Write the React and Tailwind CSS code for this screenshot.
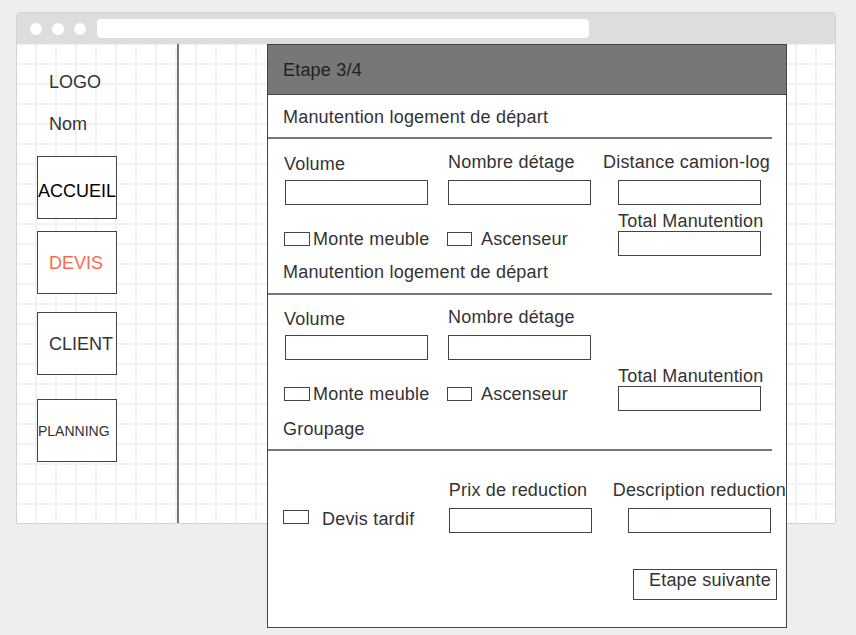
import React from 'react'

const Box = ({ className = '' }) => (
  <div className={`h-[25px] w-[143px] border border-[#444] bg-white ${className}`} />
)

const Check = ({ className = '' }) => (
  <div className={`h-[14px] border border-[#444] bg-white ${className}`} />
)

const NAV = [
  { label: 'ACCUEIL', cls: 'text-black justify-center pt-[6px]', mt: 'mt-[22px]' },
  { label: 'DEVIS', cls: 'text-[#fa6a50] pl-[11px]', mt: 'mt-[12px]' },
  { label: 'CLIENT', cls: 'text-[#333] pl-[11px]', mt: 'mt-[18px]' },
  { label: 'PLANNING', cls: 'text-[#333] text-[14px]', mt: 'mt-[24px]' },
]

function Sidebar() {
  return (
    <div className="w-[162px] shrink-0 border-r-2 border-[#777]">
      <p className="pl-[32px] pt-[28px]">LOGO</p>
      <p className="pl-[32px] mt-[22px]">Nom</p>
      {NAV.map(n => (
        <div key={n.label}
          className={`ml-[20px] flex h-[63px] w-[80px] items-center whitespace-nowrap border border-[#444] bg-white ${n.mt} ${n.cls}`}>
          {n.label}
        </div>
      ))}
    </div>
  )
}

function Handling({ first }) {
  return (
    <div className="flex pl-[17px]">
      {/* Volume */}
      <div className="w-[163px]">
        <p className={`-ml-px ${first ? 'mt-[15px]' : 'mt-[14px]'}`}>Volume</p>
        <Box className="mt-[6px]" />
        <div className="mt-[24px] flex items-center">
          <Check className="-ml-px w-[26px]" />
          <span className="ml-[3px]">Monte meuble</span>
        </div>
      </div>
      {/* Etage */}
      <div className="w-[155px]">
        <p className={first ? 'mt-[13px]' : 'mt-[12px]'}>Nombre détage</p>
        <Box className="mt-[8px]" />
        <div className="mt-[24px] flex items-center">
          <Check className="-ml-px w-[25px]" />
          <span className="ml-[9px]">Ascenseur</span>
        </div>
      </div>
      {/* Distance / total */}
      <div>
        {first ? (
          <>
            <p className="mt-[13px]">Distance camion-log</p>
            <Box className="ml-[15px] mt-[8px]" />
            <p className="ml-[15px] mt-[6px]">Total Manutention</p>
          </>
        ) : (
          <p className="ml-[15px] mt-[72px] leading-[19px]">Total Manutention</p>
        )}
        <Box className="ml-[15px]" />
      </div>
    </div>
  )
}

function Panel() {
  return (
    <div className="absolute left-[267px] top-[44px] h-[584px] w-[520px] border border-[#444] bg-white text-[18px] leading-5 tracking-[0.2px] text-[#333] whitespace-nowrap">
      <div className="flex h-[50px] items-center border-b border-[#444] bg-[#777] pl-[15px] text-[#222]">
        Etape 3/4
      </div>
      <p className="pl-[15px] pt-[12px] pb-[10px]">Manutention logement de départ</p>
      <div className="h-[2px] w-[504px] bg-[#777]" />

      <Handling first />
      <p className="pl-[15px] mt-[6px] mb-[11px]">Manutention logement de départ</p>
      <div className="h-[2px] w-[504px] bg-[#777]" />

      <Handling />
      <p className="pl-[15px] mt-[8px] mb-[10px]">Groupage</p>
      <div className="h-[2px] w-[504px] bg-[#777]" />

      {/* Groupage */}
      <div className="flex">
        <div className="w-[181px] pl-[15px] mt-[58px] flex items-start">
          <Check className="mt-px w-[26px]" />
          <span className="ml-[13px]">Devis tardif</span>
        </div>
        <div className="w-[164px]">
          <p className="mt-[29px]">Prix de reduction</p>
          <Box className="mt-[8px]" />
        </div>
        <div>
          <p className="mt-[29px]">Description reduction</p>
          <Box className="ml-[15px] mt-[8px]" />
        </div>
      </div>

      <div className="ml-[365px] mt-[36px] h-[31px] w-[144px] border border-[#444] pl-[15px]">
        Etape suivante
      </div>
    </div>
  )
}

export default function App() {
  return (
    <div className="relative h-[635px] w-[856px] overflow-hidden bg-[#eeeeee] font-['Liberation_Sans',Arial,sans-serif] text-[18px] leading-5 text-[#333]">
      <div className="ml-4 mt-3 h-[512px] w-[820px] overflow-hidden rounded-t-[4px] border border-[#d2d2d2] bg-white flex flex-col">
        {/* title bar */}
        <div className="flex h-[31px] shrink-0 items-center bg-[#dddddd]">
          <span className="ml-[13px] h-3 w-3 rounded-full bg-white" />
          <span className="ml-[10px] h-3 w-3 rounded-full bg-white" />
          <span className="ml-[10px] h-3 w-3 rounded-full bg-white" />
          <div className="ml-[11px] h-[19px] w-[492px] rounded-[4px] bg-white" />
        </div>
        {/* canvas */}
        <div className="flex flex-1 bg-white bg-[linear-gradient(to_right,#f2f2f2_2px,transparent_2px),linear-gradient(to_bottom,#f2f2f2_2px,transparent_2px)] bg-size-[20px_20px] bg-position-[18px_19px]">
          <Sidebar />
          <div className="flex-1" />
        </div>
      </div>
      <Panel />
    </div>
  )
}
